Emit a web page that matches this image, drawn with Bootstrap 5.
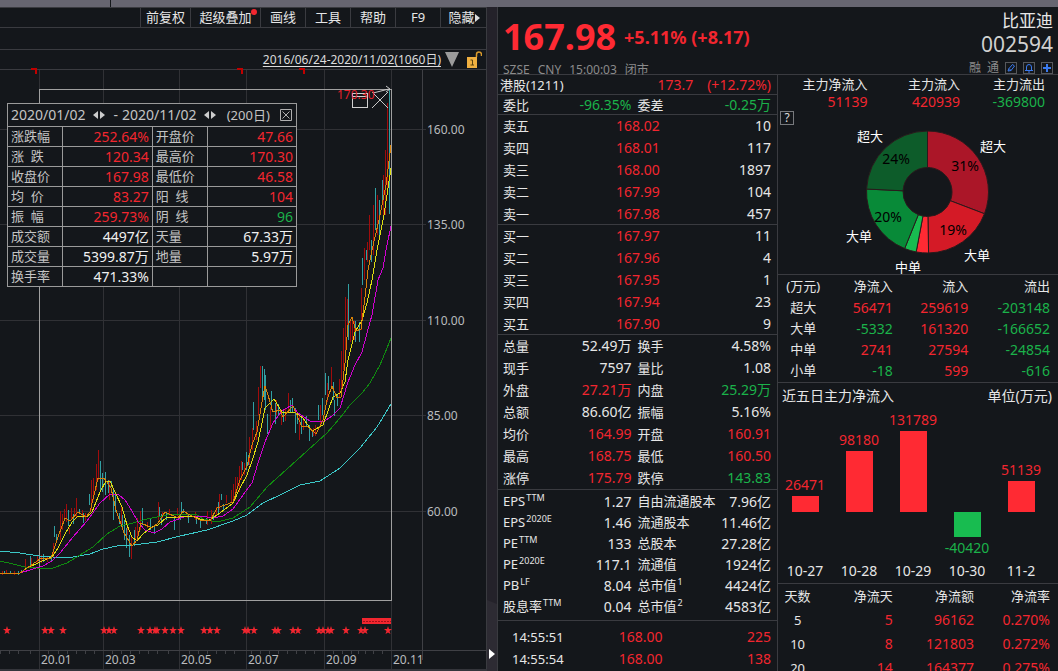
<!DOCTYPE html>
<html lang="zh-CN" data-bs-theme="dark">
<head>
<meta charset="utf-8">
<meta name="viewport" content="width=device-width, initial-scale=1">
<title>比亚迪 002594</title>
<link href="https://cdn.jsdelivr.net/npm/bootstrap@5.3.0/dist/css/bootstrap.min.css" rel="stylesheet">
<style>
:root{--bg:#14171b;--rule:#3a3b40;--up:#f2262f;--down:#1bb24a;--txt:#e6e6e6}
body{background:var(--bg);color:var(--txt);font-family:"Noto Sans","Noto Sans CJK SC",sans-serif;font-size:13px;line-height:20px}
.shell{height:100vh;overflow:hidden}
.topstrip{height:7px;background:#676671}
.topstrip i{width:10.5%;border-right:1px solid #14171b}
.main{display:grid;grid-template-columns:487fr 10px 561fr;flex:1;min-height:0}
.up{color:var(--up)!important}.down{color:var(--down)!important}
.tools{height:21px;border-top:1px solid var(--rule);border-bottom:1px solid var(--rule)}
.tools button{background:none;border:0;border-left:1px solid var(--rule);color:var(--txt);padding:0;width:45px;line-height:19px;position:relative}
.tools .w-a{width:50px}.tools .w-b{width:70px}.tools .w-c{width:47px}
.reddot{position:absolute;top:1px;right:3px;width:6px;height:6px;border-radius:50%;background:#f2262f}
.blank{height:22px;border-bottom:1px solid var(--rule)}
.range{height:20px;border-bottom:1px solid var(--rule);font-size:12px;line-height:19px;padding-right:5px}
.range a{color:#dcdcdc;text-decoration:underline;text-underline-offset:2px}
.kline,.donut{display:block;width:100%;height:auto;overflow:visible}
.kline text{font-size:12px;fill:#b9bbbe}
.stats{position:absolute;left:7px;top:33px;width:290px;background:var(--bg);border:1px solid #9a9a9a;color:#c4c4c4}
.stats header{height:22px;line-height:22px;font-size:14px;padding:0 4px 0 3px}
.stats .span-d{font-size:13px}
.stats table{width:100%;table-layout:fixed;border-collapse:separate;border-spacing:0}
.stats th,.stats td{height:20px;line-height:19px;padding:0 3px;border-top:1px solid #9a9a9a;border-right:1px solid #9a9a9a;font-weight:400;white-space:nowrap}
.stats td{text-align:right;font-size:14px;color:#f0f0f0}
.stats tr>:last-child{border-right:0}
.iconbtn{background:none;border:0;padding:0;display:flex;color:#d0d0d0}
.splitter{background:#24222a;box-shadow:-1px 0 var(--rule)}
.quote{border-left:1px solid var(--rule)}
.qhead{height:68px;box-shadow:inset 0 -1px var(--rule);padding:0 5px}
.last{font-size:36px;line-height:44px;font-weight:700;color:#ff2a33}
.chg{font-size:18px;line-height:44px;font-weight:700}
.meta-line{font-size:12px;line-height:14px;color:#8b8b8b}
.sname{font-size:17px;line-height:20px}.scode{font-size:21px;line-height:26px;color:#d0d0d0}
.sq{width:12px;height:12px;border:1px solid #56585c;background:none;padding:0;display:flex}
.cols{display:grid;grid-template-columns:279fr 281fr;flex:1;min-height:0}
.cols>div+div{border-left:1px solid var(--rule)}
.rule{box-shadow:inset 0 -1px var(--rule)}
.g{width:100%;table-layout:fixed;border-collapse:collapse}
.g th,.g td{padding:0;font-weight:400;text-align:right;white-space:nowrap;height:22px;line-height:22px}
.g td{font-size:14px}
.g th.s,.g td.s{text-align:left;padding-left:5px}
.g.h20 th,.g.h20 td{height:20px;line-height:20px}
.g.h21 th,.g.h21 td{height:21px;line-height:21px}
.g.h24 th,.g.h24 td{height:24px;line-height:24px}
.g.h18 th,.g.h18 td{height:18px;line-height:18px}
.g tr>:last-child{padding-right:6px}
.two th{text-align:left}.two th:first-child{padding-left:5px}.two td:nth-child(2){padding-right:6px}
.g sup{font-size:9px;top:-5px;margin-left:1px}
.tick td:first-child{font-size:13px;text-align:left;padding-left:14px}
.flow th:first-child{text-align:center}
.flow tr>:last-child,.days tr>:last-child{padding-right:8px}
.sumtab tr>:last-child{padding-right:13px}
.help{position:absolute;left:2px;top:0;width:14px;height:14px;line-height:12px;font-size:12px;border:1px solid #77797d;background:none;color:#ddd;padding:0}
.donut text{font-size:13px;fill:#fff;text-anchor:middle}.donut .pc{font-size:14px;fill:#000}
.bars{display:grid;grid-template-columns:repeat(5,1fr);padding-right:10px;text-align:center;font-size:14px;line-height:22px}
.pos{height:104px;display:flex;flex-direction:column;justify-content:flex-end;align-items:center}
.neg{height:48px;display:flex;flex-direction:column;align-items:center}
.bar-v{width:50%;background:#ff2a33}.neg .bar-v{background:#18bc50}
.ttl{font-size:14px;line-height:25px;padding:0 6px 0 4px}
</style>
</head>
<body>
<div class="shell d-flex flex-column">
<div class="topstrip d-flex"><i></i></div>
<main class="main">
<section class="kpane">
  <nav class="tools d-flex justify-content-end">
    <button class="w-a">前复权</button><button class="w-b">超级叠加<span class="reddot"></span></button><button>画线</button><button>工具</button><button>帮助</button><button>F9</button><button class="w-c d-flex align-items-center justify-content-center">隐藏<svg width="5" height="8"><path d="M0 0L5 4L0 8Z" fill="#ddd"/></svg></button>
  </nav>
  <div class="blank"></div>
  <div class="range d-flex justify-content-end align-items-center"><a href="#">2016/06/24-2020/11/02(1060日)</a>
    <svg class="ms-1" width="14" height="15"><path d="M0 0H14L7 15Z" fill="#9b9b9b"/></svg>
    <svg class="ms-2" width="15" height="17"><path d="M9.500 6V3.500Q9.500 1 12 1T14.500 3.500V5" fill="none" stroke="#d99a2b" stroke-width="1.500"/><rect y="6" width="10" height="11" fill="#f0b040"/><path d="M3.500 9H5.500V14M3.500 14H7" stroke="#5b430f" fill="none"/></svg>
  </div>
  <div class="position-relative">
  <svg class="kline" viewBox="0 70 487 601">
    <g shape-rendering="crispEdges" fill="none">
      <path stroke="#303135" d="M0 129.500H426M0 224.500H426M0 320.500H426M0 415.500H426M0 511.500H426M39.500 70V669M103.500 70V669M179.500 70V669M246.500 70V669M324.500 70V669M391.500 70V669"/>
      <path stroke="#3f4045" d="M422.500 70V660M0 650.500H487M0.500 650v4M9.500 650v4M18.500 650v4M30.500 650v4M48.500 650v4M58.500 650v4M67.500 650v4M76.500 650v4M85.500 650v4M94.500 650v4M112.500 650v4M121.500 650v4M130.500 650v4M139.500 650v4M148.500 650v4M157.500 650v4M168.500 650v4M189.500 650v4M198.500 650v4M207.500 650v4M216.500 650v4M225.500 650v4M234.500 650v4M251.500 650v4M260.500 650v4M269.500 650v4M278.500 650v4M287.500 650v4M296.500 650v4M305.500 650v4M314.500 650v4M333.500 650v4M342.500 650v4M351.500 650v4M358.500 650v4M365.500 650v4M373.500 650v4M382.500 650v4"/>
      <path stroke="#34353b" stroke-width="2" d="M0 670H487"/>
      <path stroke="#a00c0c" d="M2.500 571V575M6.500 570V574M14.500 571V575M25.500 559V570M31.500 558V568M37.500 556V563M41.500 555V563M47.500 556V562M53.500 543V558M60.500 511V540M62.500 514V530M64.500 509V520M66.500 504V522M69.500 528V534M71.500 508V519M74.500 508V516M76.500 498V517M82.500 510V518M85.500 513V521M91.500 480V510M93.500 478V500M96.500 464V490M98.500 450V480M109.500 480V500M121.500 505V525M127.500 523V535M131.500 535V559M135.500 527V540M137.500 518V538M140.500 511V530M147.500 522V528M158.500 502V520M162.500 512V518M169.500 509V515M177.500 508V516M187.500 514V518M195.500 512V520M207.500 511V525M211.500 510V524M216.500 507V515M219.500 494V510M226.500 495V503M231.500 490V503M233.500 484V502M235.500 477V500M237.500 477V490M239.500 466V492M241.500 461V480M244.500 463V475M249.500 437V465M252.500 428V450M256.500 421V440M258.500 387V415M260.500 366V388M270.500 407V428M276.500 400V415M281.500 412V425M285.500 409V421M288.500 393V413M299.500 415V440M303.500 419V430M313.500 428V436M315.500 425V436M320.500 405V425M327.500 383V402M331.500 367V388M339.500 379V398M341.500 351V395M343.500 328V370M345.500 297V350M347.500 299V325M350.500 320V342M352.500 320V343M354.500 321V340M361.500 288V330M364.500 248V280M367.500 242V262M369.500 215V250M373.500 205V255M377.500 195V235M383.500 175V220M385.500 150V215M387.500 103V190"/>
      <path stroke="#31a0a3" d="M4.500 571V574M10.500 571V574M18.500 571V575M21.500 570V573M30.500 556V566M43.500 554V562M51.500 557V562M54.500 526V537M56.500 534V540M68.500 510V526M73.500 514V524M79.500 509V514M83.500 513V523M89.500 494V505M100.500 461V490M102.500 473V492M105.500 472V495M108.500 480V493M111.500 481V487M113.500 490V520M115.500 495V512M119.500 513V524M122.500 515V530M124.500 520V540M126.500 528V548M129.500 535V557M134.500 530V546M142.500 508V525M150.500 518V530M154.500 525V534M159.500 507V517M161.500 514V525M166.500 513V520M174.500 516V530M180.500 514V520M181.500 502V515M183.500 509V513M188.500 514V523M196.500 518V524M200.500 521V528M206.500 518V524M213.500 513V520M218.500 502V514M221.500 494V500M223.500 504V510M242.500 462V470M246.500 452V470M248.500 455V465M253.500 402V430M262.500 366V400M264.500 369V400M265.500 375V410M267.500 414V434M271.500 391V410M275.500 403V424M278.500 404V415M283.500 409V422M290.500 400V412M292.500 398V412M295.500 408V433M297.500 412V424M301.500 418V434M306.500 416V426M309.500 425V441M312.500 430V437M318.500 405V420M322.500 398V415M325.500 373V395M328.500 376V390M333.500 382V400M334.500 400V416M337.500 394V406M348.500 284V340M355.500 321V342M359.500 322V342M362.500 258V285M366.500 250V260M371.500 240V262M375.500 188V230M379.500 200V240M382.500 180V200"/>
      <path stroke="#31a0a3" d="M389.500 90V214"/>
      <path stroke="#a0a0a0" d="M39.500 89.500H391.500V600.500H39.500Z"/>
      <path stroke="#3cc8c8" d="M0 551L20 553L39 556L53 557L73 557L90 554L103 549L117 546L133 545L157 542L180 536L207 530L233 521L247 515L263 503L280 495L300 485L320 481L340 468L360 448L377 427L391 404"/>
      <path stroke="#108a10" d="M0 561L13 564L25 567L37 568L53 568L67 563L80 555L93 547L107 534L120 526L133 523L147 519L167 515L187 514L197 515L203 519L217 522L233 518L250 507L267 487L287 469L307 451L327 433L340 418L350 405L362 393L370 383L380 365L385 353L391 338"/>
      <path stroke="#d000d0" d="M0 573H20L33 569L43 566L52 561L60 553L73 537L87 521L100 503L110 494H118L125 500L132 511L138 522L145 530L154 533L162 529L170 522L187 516H200L213 518L223 516L233 509L243 495L252 483L258 463L265 442L273 423L282 411L292 405L298 413L310 421L323 422L332 416L340 408L348 382L355 365L362 352L367 333L372 315L378 280L383 268L386 250L391 226"/>
      <path stroke="#dddd10" d="M0 573H20L27 568L40 562L52 557L58 548L65 534L72 522L78 516H88L92 512L100 492L106 481H110L115 492L122 507L127 525L132 537L137 541L143 534L152 527L158 525L167 517H180L193 516L200 519L208 521L220 513L233 503L240 488L247 475L253 458L258 442L262 423L265 408L274 399L282 412H295L303 418L312 431L323 425L333 397L340 393L345 382L348 360L355 332L362 320L367 303L372 280L377 250L384 215L391 168"/>
      <path stroke="#d98208" d="M0 573L20 573L30 566L40 559L51 558L58 537L65 518L70 521L78 512L86 517L90 512L98 478H104L111 488L116 510L124 533L132 546L137 540L141 523L152 528L158 523L165 512L178 518L183 511L190 515L200 520L210 521L217 508L233 502L240 480L247 466L252 445L257 432L262 402L265 386L268 395L273 412L280 410L283 417L293 406L302 427L307 426L316 434L323 420L327 400L332 386L337 398L341 397L345 363L348 325L352 317L356 331L361 329L365 297L368 270L372 250L379 220L386 185L391 145"/>
      <path stroke="#c00000" stroke-width="2" d="M31 69H36V74M237 69H242V74M299 69H304V74"/>
      <path stroke="#d0d0d0" d="M352.500 93.500H367.500V107.500H352.500ZM352 96.500H367"/>
    </g>
    <path d="M372 92L388 108M388 92L372 108M373 93L389 89M386 86L390 89L386 92" stroke="#c8c8c8" fill="none"/>
    <text x="337" y="99" style="fill:#e0202a">170.30</text>
    <g><text x="427" y="134">160.00</text><text x="427" y="229">135.00</text><text x="427" y="325">110.00</text><text x="427" y="420">85.00</text><text x="427" y="516">60.00</text></g>
    <g><text x="41" y="664">20.01</text><text x="105" y="664">20.03</text><text x="181" y="664">20.05</text><text x="248" y="664">20.07</text><text x="326" y="664">20.09</text><text x="393" y="664">20.11</text></g>
    <path d="M362 618H391V624H362Z" fill="#f2262f"/><path d="M363 621.500H391" stroke="#a01018" stroke-dasharray="2 1"/>
    <g id="stars" fill="#f2262f"></g>
  </svg>
  <section class="stats">
    <header class="d-flex align-items-center"><span>2020/01/02</span>
      <button class="iconbtn ms-2" aria-label="调整起始日"><svg width="12" height="8"><path d="M5 0V8L0 4ZM7 0V8L12 4Z" fill="#ccc"/></svg></button>
      <span class="ms-2 me-1">-</span><span>2020/11/02</span>
      <button class="iconbtn ms-2" aria-label="调整结束日"><svg width="12" height="8"><path d="M5 0V8L0 4ZM7 0V8L12 4Z" fill="#ccc"/></svg></button>
      <span class="mx-auto span-d">(200日)</span>
      <button class="iconbtn" aria-label="关闭"><svg width="12" height="12"><path d="M.5 .5H11.500V11.500H.5ZM2.500 2.500L9.500 9.500M9.500 2.500L2.500 9.500" fill="none" stroke="#b0b0b0"/></svg></button>
    </header>
    <table>
      <colgroup><col style="width:19%"><col style="width:31.300%"><col style="width:19%"><col style="width:30.700%"></colgroup>
      <tr><th>涨跌幅</th><td class="up">252.64%</td><th>开盘价</th><td class="up">47.66</td></tr>
      <tr><th>涨&nbsp; 跌</th><td class="up">120.34</td><th>最高价</th><td class="up">170.30</td></tr>
      <tr><th>收盘价</th><td class="up">167.98</td><th>最低价</th><td class="up">46.58</td></tr>
      <tr><th>均&nbsp; 价</th><td class="up">83.27</td><th>阳&nbsp; 线</th><td class="up">104</td></tr>
      <tr><th>振&nbsp; 幅</th><td class="up">259.73%</td><th>阴&nbsp; 线</th><td class="down">96</td></tr>
      <tr><th>成交额</th><td>4497亿</td><th>天量</th><td>67.33万</td></tr>
      <tr><th>成交量</th><td>5399.87万</td><th>地量</th><td>5.97万</td></tr>
      <tr><th>换手率</th><td>471.33%</td><th></th><td></td></tr>
    </table>
  </section>
  </div>
</section>
<div class="splitter d-flex flex-column justify-content-end">
  <svg width="10" height="80"><path d="M0 0L10 4V80H0Z" fill="#2d2b33"/><path d="M2 49L8 54L2 59Z" fill="#fff"/></svg>
</div>
<section class="quote d-flex flex-column">
  <header class="qhead d-flex justify-content-between">
    <div class="pt-1">
      <div class="d-flex pt-1"><span class="last">167.98</span><span class="chg up ms-2">+5.11% (+8.17)</span></div>
      <div class="meta-line d-flex gap-2 pt-1"><span>SZSE</span><span>CNY</span><span>15:00:03</span><span>闭市</span></div>
    </div>
    <div class="text-end pt-1">
      <div class="sname">比亚迪</div><div class="scode">002594</div>
      <div class="meta-line d-flex justify-content-end align-items-center pt-1" style="gap:6px"><span>融</span><span>通</span>
        <button class="sq" aria-label="编辑"><svg width="10" height="10"><path d="M2 8L3 5.500L6.500 1.500L8.500 3L5 7.500ZM3 5.500L5 7.500" fill="none" stroke="#3b7bf0"/></svg></button>
        <button class="sq" aria-label="提醒"><svg width="10" height="10"><path d="M1 7.500H9M2.500 7V4Q2.500 1.500 5 1.500T7.500 4V7M4 9H6" fill="none" stroke="#3b7bf0"/></svg></button>
        <button class="sq" aria-label="添加"><svg width="10" height="10"><path d="M5 1V9M1 5H9" stroke="#3b7bf0" stroke-width="2"/></svg></button>
      </div>
    </div>
  </header>
  <div class="cols">
  <div>
    <div class="rule"><table class="g h20"><colgroup><col style="width:40%"><col style="width:30%"><col style="width:30%"></colgroup><tr><th class="s" style="padding-left:2px">港股(1211)</th><td class="up">173.7</td><td class="up">(+12.72%)</td></tr></table></div>
    <div class="rule"><table class="g h20 two"><colgroup><col style="width:23%"><col style="width:27%"><col style="width:20%"><col style="width:30%"></colgroup><tr><th>委比</th><td class="down">-96.35%</td><th>委差</th><td class="down">-0.25万</td></tr></table></div>
    <div class="rule"><table class="g"><colgroup><col style="width:30%"><col style="width:28%"><col style="width:42%"></colgroup>
      <tr><th class="s">卖五</th><td class="up">168.02</td><td>10</td></tr><tr><th class="s">卖四</th><td class="up">168.01</td><td>117</td></tr><tr><th class="s">卖三</th><td class="up">168.00</td><td>1897</td></tr><tr><th class="s">卖二</th><td class="up">167.99</td><td>104</td></tr><tr><th class="s">卖一</th><td class="up">167.98</td><td>457</td></tr></table></div>
    <div class="rule"><table class="g"><colgroup><col style="width:30%"><col style="width:28%"><col style="width:42%"></colgroup>
      <tr><th class="s">买一</th><td class="up">167.97</td><td>11</td></tr><tr><th class="s">买二</th><td class="up">167.96</td><td>4</td></tr><tr><th class="s">买三</th><td class="up">167.95</td><td>1</td></tr><tr><th class="s">买四</th><td class="up">167.94</td><td>23</td></tr><tr><th class="s">买五</th><td class="up">167.90</td><td>9</td></tr></table></div>
    <div class="rule" style="padding-bottom:1px"><table class="g two"><colgroup><col style="width:23%"><col style="width:27%"><col style="width:20%"><col style="width:30%"></colgroup>
      <tr><th>总量</th><td>52.49万</td><th>换手</th><td>4.58%</td></tr>
      <tr><th>现手</th><td>7597</td><th>量比</th><td>1.08</td></tr>
      <tr><th>外盘</th><td class="up">27.21万</td><th>内盘</th><td class="down">25.29万</td></tr>
      <tr><th>总额</th><td>86.60亿</td><th>振幅</th><td>5.16%</td></tr>
      <tr><th>均价</th><td class="up">164.99</td><th>开盘</th><td class="up">160.91</td></tr>
      <tr><th>最高</th><td class="up">168.75</td><th>最低</th><td class="up">160.50</td></tr>
      <tr><th>涨停</th><td class="up">175.79</td><th>跌停</th><td class="down">143.83</td></tr></table></div>
    <div class="rule" style="padding:1px 0 4px"><table class="g h21 two"><colgroup><col style="width:23%"><col style="width:27%"><col style="width:28%"><col style="width:22%"></colgroup>
      <tr><th>EPS<sup>TTM</sup></th><td>1.27</td><th>自由流通股本</th><td>7.96亿</td></tr>
      <tr><th>EPS<sup>2020E</sup></th><td>1.46</td><th>流通股本</th><td>11.46亿</td></tr>
      <tr><th>PE<sup>TTM</sup></th><td>133</td><th>总股本</th><td>27.28亿</td></tr>
      <tr><th>PE<sup>2020E</sup></th><td>117.1</td><th>流通值</th><td>1924亿</td></tr>
      <tr><th>PB<sup>LF</sup></th><td>8.04</td><th>总市值<sup>1</sup></th><td>4424亿</td></tr>
      <tr><th>股息率<sup>TTM</sup></th><td>0.04</td><th>总市值<sup>2</sup></th><td>4583亿</td></tr></table></div>
    <div style="padding-top:5px"><table class="g tick"><colgroup><col style="width:30%"><col style="width:29%"><col style="width:41%"></colgroup>
      <tr><td>14:55:51</td><td class="up">168.00</td><td class="up">225</td></tr><tr><td>14:55:54</td><td class="up">168.00</td><td class="up">138</td></tr></table></div>
  </div>
  <div>
    <div class="rule" style="padding-bottom:1px">
      <table class="g h18 sumtab"><colgroup><col style="width:32%"><col style="width:33%"><col style="width:35%"></colgroup><tr><th>主力净流入</th><th>主力流入</th><th>主力流出</th></tr><tr><td class="up">51139</td><td class="up">420939</td><td class="down">-369800</td></tr></table>
      <div class="position-relative"><button class="help" aria-label="帮助">?</button>
      <svg class="donut" viewBox="778 111 280 163" id="donut"><g id="slices" stroke="#2a1a1c"></g>
        <text class="pc" x="896" y="164">24%</text><text class="pc" x="965" y="171">31%</text><text class="pc" x="953" y="235">19%</text><text class="pc" x="888" y="222">20%</text>
        <text x="870" y="141">超大</text><text x="993" y="151">超大</text><text x="859" y="241">大单</text><text x="977" y="260">大单</text><text x="908" y="272">中单</text></svg></div>
    </div>
    <div class="rule" style="padding:1px 0 2px"><table class="g h21 flow"><colgroup><col style="width:18%"><col style="width:23%"><col style="width:27%"><col style="width:32%"></colgroup>
      <tr><th>(万元)</th><th>净流入</th><th>流入</th><th>流出</th></tr>
      <tr><th>超大</th><td class="up">56471</td><td class="up">259619</td><td class="down">-203148</td></tr>
      <tr><th>大单</th><td class="down">-5332</td><td class="up">161320</td><td class="down">-166652</td></tr>
      <tr><th>中单</th><td class="up">2741</td><td class="up">27594</td><td class="down">-24854</td></tr>
      <tr><th>小单</th><td class="down">-18</td><td class="up">599</td><td class="down">-616</td></tr></table></div>
    <div class="rule" style="padding-bottom:2px">
      <div class="ttl d-flex justify-content-between"><span>近五日主力净流入</span><span>单位(万元)</span></div>
      <div class="bars">
        <div><div class="pos up">26471<div class="bar-v" style="height:16px"></div></div><div class="neg"></div>10-27</div>
        <div><div class="pos up">98180<div class="bar-v" style="height:61px"></div></div><div class="neg"></div>10-28</div>
        <div><div class="pos up">131789<div class="bar-v" style="height:81px"></div></div><div class="neg"></div>10-29</div>
        <div><div class="pos"></div><div class="neg down"><div class="bar-v" style="height:25px"></div>-40420</div>10-30</div>
        <div><div class="pos up">51139<div class="bar-v" style="height:31px"></div></div><div class="neg"></div>11-2</div>
      </div>
    </div>
    <table class="g h24 days flow"><colgroup><col style="width:14%"><col style="width:27%"><col style="width:29%"><col style="width:30%"></colgroup>
      <tr><th>天数</th><th>净流天</th><th>净流额</th><th>净流率</th></tr>
      <tr><th>5</th><td class="up">5</td><td class="up">96162</td><td class="up">0.270%</td></tr>
      <tr><th>10</th><td class="up">8</td><td class="up">121803</td><td class="up">0.272%</td></tr>
      <tr><th>20</th><td class="up">14</td><td class="up">164377</td><td class="up">0.275%</td></tr></table>
  </div>
  </div>
</section>
</main>
</div>
<script src="https://cdn.jsdelivr.net/npm/bootstrap@5.3.0/dist/js/bootstrap.bundle.min.js"></script>
<script>
// event stars under the price chart
document.getElementById('stars').innerHTML=[7,45,51,63,104,109,114,141,150,155,157,165,173,181,204,210,217,245,248,254,275,278,293,298,319,323,328,331,346,361,365,388]
 .map(x=>`<path d="M${x} 626l1 3h3l-2.500 2 1 3-2.500-1.500-2.500 1.500 1-3-2.500-2h3z"/>`).join('');
// ring chart: start angle, end angle (clockwise from 12), colour
const cx=927.5,cy=192,R=61,r=24.5,pt=(a,q)=>{a*=Math.PI/180;return (cx+q*Math.sin(a))+' '+(cy-q*Math.cos(a))};
document.getElementById('slices').innerHTML=[[0,110.9,'#ab1628'],[110.9,179,'#d41a26'],[179,190.7,'#ff2a33'],[190.7,202,'#18bc50'],[202,272.8,'#088a38'],[272.8,360,'#0d5c2a']]
 .map(([a,b,c])=>`<path fill="${c}" d="M${pt(a,R)}A${R} ${R} 0 0 1 ${pt(b,R)}L${pt(b,r)}A${r} ${r} 0 0 0 ${pt(a,r)}Z"/>`).join('');
</script>
</body>
</html>
